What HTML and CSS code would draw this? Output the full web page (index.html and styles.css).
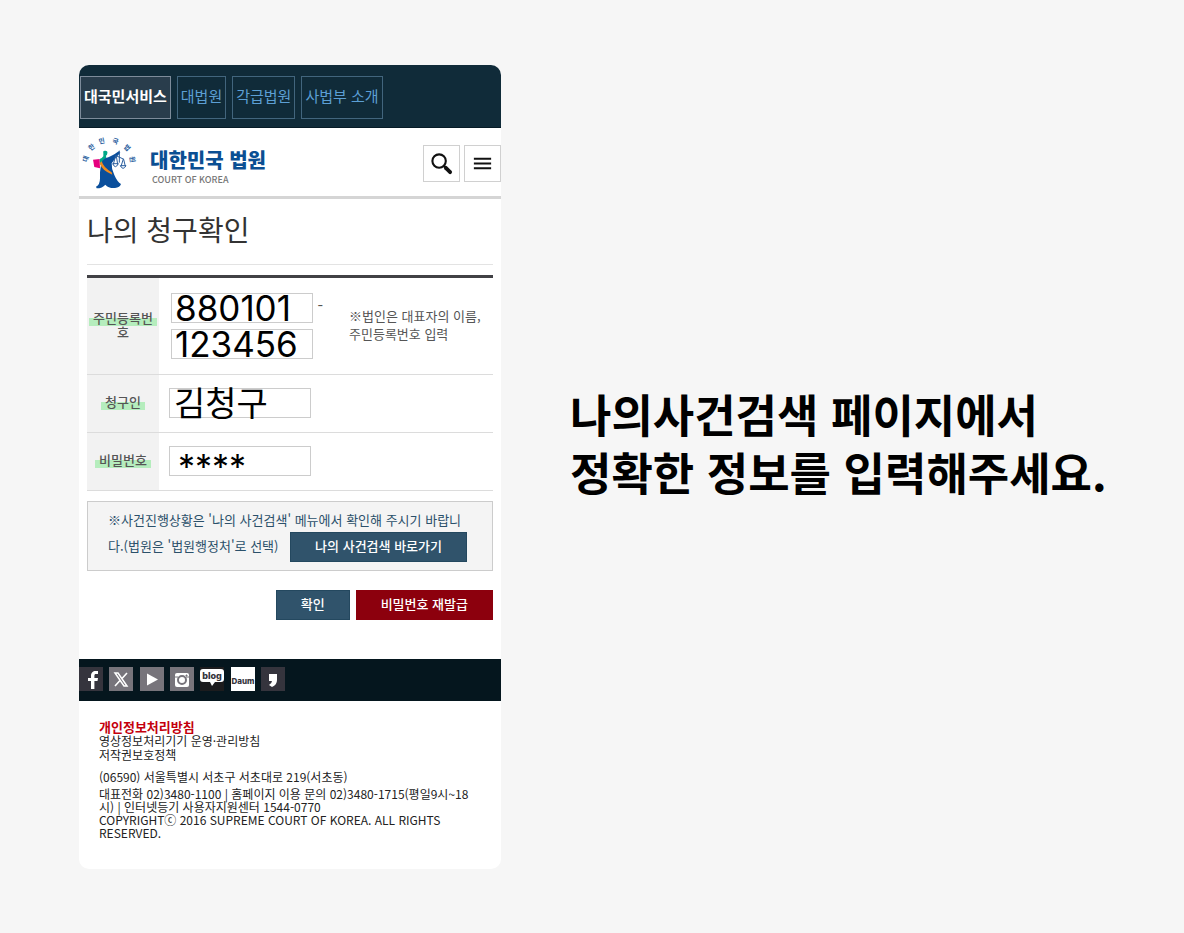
FILE: index.html
```
<!DOCTYPE html>
<html lang="ko">
<head>
  <meta charset="UTF-8" />
  <title>나의 청구확인 - 대한민국 법원</title>
  <meta name="viewport" content="width=device-width, initial-scale=1.0">
  <link rel="stylesheet" href="styles.css">
</head>
<body>
  <main class="guide">
    <div class="phone">
      <nav class="top-nav">
        <a href="#" class="active">대국민서비스</a>
        <a href="#">대법원</a>
        <a href="#">각급법원</a>
        <a href="#">사법부 소개</a>
      </nav>

      <header class="site-header">
        <a href="#" class="brand">
          <svg class="emblem" viewBox="6 24 174 168" aria-hidden="true">
            <g class="emblem-text">
              <text transform="translate(30 98) rotate(-72)">대</text>
              <text transform="translate(45 66) rotate(-40)">한</text>
              <text transform="translate(73 49) rotate(-12)">민</text>
              <text transform="translate(110 49) rotate(18)">국</text>
              <text transform="translate(142 67) rotate(45)">법</text>
              <text transform="translate(156 98) rotate(80)">원</text>
            </g>
            <path d="M45 98 L65 96 L66 124 L49 120 Z" fill="#e6007e"/>
            <path d="M76 78 Q74 70 82 71 Q90 72 88 79 Q88 84 84 86 L85 94 Q76 99 73 109 L67 114 L65 96 Q72 94 76 88 Z" fill="#00a887"/>
            <path d="M84 93 Q101 89 122 73 L127 77 Q111 93 101 109 Q100 126 109 144 Q118 165 129 171 Q126 181 111 183 Q91 184 82 173 Q73 184 56 184 L54 179 Q66 174 66 154 Q65 135 69 111 Q73 98 84 93 Z" fill="#0b4f9c"/>
            <path d="M71 103 Q76 121 101 136 L103 143 Q73 132 65 109 Z" fill="#f08a1d"/>
            <g fill="none" stroke="#2c5f9f" stroke-width="3">
              <path d="M124 71 V107 M112 85 L138 97 M113 86 L106 112 M115 87 L119 112 M136 96 L129 118 M137 97 L142 118"/>
              <path d="M104 110 Q112 128 121 110 Z M127 116 Q135 132 144 116 Z"/>
            </g>
          </svg>
          <span class="brand-name">
            <strong>대한민국 법원</strong>
            <small>COURT OF KOREA</small>
          </span>
        </a>
        <div class="tools">
          <button type="button" aria-label="검색">
            <svg viewBox="0 0 24 24" fill="none" stroke="#111">
              <circle cx="9.5" cy="9.5" r="7" stroke-width="2.2"/>
              <path d="M14.5 14.5 L16.5 16.5" stroke-width="2.4"/>
              <path d="M16.5 16.5 L21 21" stroke-width="4" stroke-linecap="round"/>
            </svg>
          </button>
          <button type="button" aria-label="메뉴">
            <svg viewBox="0 0 24 24" fill="#111">
              <path d="M3 6h18v2H3zM3 11h18v2H3zM3 16h18v2H3z"/>
            </svg>
          </button>
        </div>
      </header>

      <form class="claim">
        <h1>나의 청구확인</h1>
        <table>
          <tr class="tall">
            <th scope="row"><label for="rrn1"><mark>주민등록번</mark><br>호</label></th>
            <td class="numbers">
              <input type="text" id="rrn1" value="880101"> <span>-</span>
              <input type="text" id="rrn2" value="123456" aria-label="주민등록번호 뒷자리">
            </td>
            <td class="hint">※법인은 대표자의 이름, 주민등록번호 입력</td>
          </tr>
          <tr>
            <th scope="row"><label for="claimant"><mark>청구인</mark></label></th>
            <td colspan="2"><div class="name-box"><input type="text" id="claimant" value="김청구"></div></td>
          </tr>
          <tr>
            <th scope="row"><label for="pin"><mark>비밀번호</mark></label></th>
            <td colspan="2"><input type="text" id="pin" class="pin" value="****"></td>
          </tr>
        </table>

        <div class="notice">
          ※사건진행상황은 '나의 사건검색' 메뉴에서 확인해 주시기 바랍니다.(법원은 '법원행정처'로 선택)
          <button type="button" class="btn">나의 사건검색 바로가기</button>
        </div>

        <div class="actions">
          <button type="button" class="btn">확인</button>
          <button type="button" class="btn red">비밀번호 재발급</button>
        </div>
      </form>

      <div class="social">
        <div class="social-links">
          <a href="#" class="dark" aria-label="Facebook">
            <svg viewBox="0 0 24 24"><path d="M12 22v-8H9v-3h3V9c0-3.500 2-5 4.500-5H19v3h-2c-1.200 0-1.600.6-1.600 1.700V11H19l-.5 3h-3.100v8z" fill="#fff"/></svg>
          </a>
          <a href="#" aria-label="X">
            <svg viewBox="0 0 24 24" fill="none" stroke="#fff"><path d="M6 6h3l9 13h-3z" stroke-width="1.500"/><path d="M18 6l-5 5.500M11 13.500L6 19" stroke-width="1.600"/></svg>
          </a>
          <a href="#" aria-label="YouTube">
            <svg viewBox="0 0 24 24"><path d="M7 6.500l11 6-11 6z" fill="#fff"/></svg>
          </a>
          <a href="#" aria-label="Instagram">
            <svg viewBox="0 0 24 24"><rect x="5" y="6" width="14" height="14" rx="2" fill="#fff"/><circle cx="12" cy="13" r="4" fill="none" stroke="#77747b" stroke-width="2"/><path d="M5 10h3M16 10h3M16 8h1v1h-1z" stroke="#77747b" fill="#77747b"/></svg>
          </a>
          <a href="#" class="black" aria-label="Blog">
            <svg viewBox="0 0 24 24"><path d="M3 2h18q3 0 3 3v7q0 3-3 3h-6l-3 4-2-4H3q-3 0-3-3V5q0-3 3-3z" fill="#fff"/><text x="12" y="12" text-anchor="middle" class="blog-text">blog</text></svg>
          </a>
          <a href="#" class="white" aria-label="Daum">
            <svg viewBox="0 0 24 24"><text x="12" y="17" text-anchor="middle" class="daum-text">Daum</text></svg>
          </a>
          <a href="#" class="dark" aria-label="KakaoStory">
            <svg viewBox="0 0 24 24"><path d="M8 7h8v6q0 5-5 7l-3-2q3-2 3-4H8z" fill="#fff"/></svg>
          </a>
        </div>
      </div>

      <footer>
        <ul>
          <li><a href="#" class="privacy">개인정보처리방침</a></li>
          <li><a href="#">영상정보처리기기 운영·관리방침</a></li>
          <li><a href="#">저작권보호정책</a></li>
        </ul>
        <address>(06590) 서울특별시 서초구 서초대로 219(서초동)</address>
        <p>대표전화 02)3480-1100 | 홈페이지 이용 문의 02)3480-1715(평일9시~18시) | 인터넷등기 사용자지원센터 1544-0770</p>
        <p>COPYRIGHTⓒ 2016 SUPREME COURT OF KOREA. ALL RIGHTS RESERVED.</p>
      </footer>
    </div>

    <p class="message">나의사건검색 페이지에서<br>정확한 정보를 입력해주세요.</p>
  </main>
</body>
</html>
```
FILE: styles.css
```
* {
  box-sizing: border-box;
}
body {
  margin: 0;
  font-family: "Noto Sans CJK KR", sans-serif;
  background-color: #f6f6f6;
  color: #111;
}
a {
  color: inherit;
  text-decoration: none;
}
button, input {
  font-family: inherit;
}
.guide {
  display: flex;
  align-items: center;
  gap: 69px;
  min-height: 100vh;
  padding: 64px 76px 64px 79px;
}
.phone {
  width: 100%;
  max-width: 422px;
  background: white;
  border-radius: 10px;
  overflow: hidden;
}

/* top menu */
.top-nav {
  display: flex;
  gap: 6px;
  padding: 11px 1px 8px;
  background: #102b39;
  border-bottom: 1px solid #061b26;
}
.top-nav a {
  padding: 0 3px 3px;
  border: 1px solid #42657d;
  color: #5c9fd4;
  font-size: 15px;
  line-height: 38px;
  white-space: nowrap;
}
.top-nav a.active {
  background: #293d4c;
  border-color: #7d8b9a;
  color: white;
  font-weight: 700;
}

.site-header {
  display: flex;
  align-items: center;
  justify-content: space-between;
  padding: 7px 0 5px 1px;
  border-bottom: 3px solid #d5d5d5;
}
.brand {
  display: flex;
  align-items: center;
  gap: 12px;
}
.emblem {
  width: 58px;
  height: 56px;
}
.emblem-text {
  fill: #245b9c;
  font-size: 20px;
  font-weight: 700;
  text-anchor: middle;
}
.brand-name {
  padding-top: 10px;
}
.brand-name strong {
  display: block;
  color: #0b4f93;
  font-size: 20px;
  font-weight: 900;
  line-height: 24px;
}
.brand-name small {
  display: block;
  padding-left: 2px;
  color: #777;
  font-size: 9px;
  font-weight: 500;
  line-height: 16px;
}
.tools {
  display: flex;
  gap: 4px;
  padding-top: 2px;
}
.tools button {
  width: 37px;
  height: 37px;
  padding: 0 6px;
  border: 1px solid #d0d0d0;
  background: white;
}
.tools svg {
  display: block;
  width: 100%;
}

/* form */
.claim {
  padding: 0 8px 39px;
}
.claim h1 {
  margin: 0 0 10px;
  padding-bottom: 4px;
  border-bottom: 1px solid #e3e3e3;
  color: #333;
  font-size: 28px;
  font-weight: 400;
  line-height: 61px;
}
table {
  width: 100%;
  border-collapse: collapse;
  border-top: 3px solid #414145;
}
tr {
  height: 58px;
  border-bottom: 1px solid #dcdcdc;
}
.tall {
  height: 98px;
}
th {
  width: 72px;
  padding: 0 0 2px;
  background: #f2f2f2;
  color: #555;
  font-size: 13px;
  font-weight: 500;
  line-height: 14px;
}
mark {
  padding: 0 4px;
  background: linear-gradient(transparent 55%, #b5edbd 55%, #b5edbd 95%, transparent 95%);
  color: inherit;
}
td {
  padding: 0 0 0 10px;
}
td input, .name-box {
  display: block;
  width: 142px;
  height: 30px;
  padding: 0 4px;
  border: 1px solid #ccc;
  background: white;
  color: #000;
  font-size: 34px;
}
.numbers {
  width: 180px;
  padding-left: 12px;
}
.numbers span {
  color: #555;
  line-height: 30px;
}
.numbers input {
  display: inline-block;
  margin: 3px 0;
  padding: 0 3px;
  font-family: Inter, sans-serif;
  font-size: 35px;
  vertical-align: top;
}
/* the name is taller than its frame, so the frame is drawn around the input */
.name-box {
  display: flex;
  align-items: center;
}
.name-box input {
  flex: none;
  width: 100%;
  height: 50px;
  padding: 0 0 4px;
  border: none;
  background: none;
}
td .pin {
  padding: 10px 8px 0;
  font-family: Inter, sans-serif;
}
.hint {
  padding-bottom: 2px;
  color: #555;
  font-size: 13px;
  line-height: 18px;
}
.notice {
  margin-top: 10px;
  padding: 5px 20px 8px;
  border: 1px solid #ccc;
  background: #f4f4f4;
  color: #2b506a;
  font-size: 13px;
  line-height: 25px;
  word-break: break-all;
}
.btn {
  height: 30px;
  padding: 0 24px 3px;
  border: 1px solid #24485f;
  background: #30536b;
  color: white;
  font-size: 13px;
  font-weight: 500;
}
.notice .btn {
  margin-left: 8px;
  vertical-align: middle;
}
.actions {
  display: flex;
  justify-content: flex-end;
  gap: 6px;
  margin-top: 19px;
}
.red {
  border-color: #8c000d;
  background: #8c000d;
}

.social {
  padding: 8px 0 10px;
  background: #05161e;
}
.social-links {
  display: flex;
  justify-content: space-between;
  width: 206px;
}
.social a {
  width: 24px;
  height: 24px;
  background: #77747b;
}
.social svg {
  display: block;
}
.social .dark {
  background: #35343d;
}
.social .black {
  background: #1c1c1e;
}
.social .white {
  background: white;
}
.blog-text, .daum-text {
  fill: #34343c;
  font-family: Inter, sans-serif;
  font-size: 9px;
  font-weight: 800;
}
.daum-text {
  font-size: 8px;
}

footer {
  padding: 19px 20px 30px;
  color: #222;
  font-size: 12px;
  line-height: 13px;
  word-break: break-all;
}
footer ul {
  margin: 0 0 8px;
  padding: 0;
  list-style: none;
  line-height: 14px;
}
footer .privacy {
  color: #c4000d;
  font-size: 13px;
  font-weight: 700;
}
footer address {
  margin-bottom: 4px;
  font-style: normal;
}
footer p {
  margin: 0;
  word-break: break-word;
}

.message {
  margin: 0;
  padding-bottom: 48px;
  color: #000;
  font-size: 45px;
  font-weight: 700;
  line-height: 58px;
  white-space: nowrap;
}
```
